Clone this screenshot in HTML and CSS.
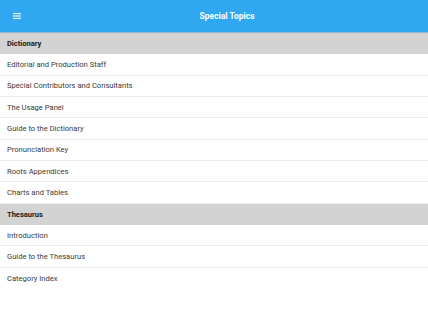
FILE: index.html
```html
<html>
<head>
<title>Special Topics</title>
<link rel="stylesheet" href="styles.css">
</head>
<body>

<div id="header">
  <div class="nav-button">
    <svg width="8" height="6" viewBox="0 0 8 6"><rect x="0" y="0" width="8" height="1.2" fill="#e6f4fd"/><rect x="0" y="2.4" width="8" height="1.2" fill="#e6f4fd"/><rect x="0" y="4.8" width="8" height="1.2" fill="#e6f4fd"/></svg>
  </div>
  <h1>Special Topics</h1>
</div>

<div class="list">
  <div class="section-header">Dictionary</div>
  <div class="item">Editorial and Production Staff</div>
  <div class="item">Special Contributors and Consultants</div>
  <div class="item">The Usage Panel</div>
  <div class="item">Guide to the Dictionary</div>
  <div class="item">Pronunciation Key</div>
  <div class="item">Roots Appendices</div>
  <div class="item">Charts and Tables</div>
  <div class="section-header">Thesaurus</div>
  <div class="item">Introduction</div>
  <div class="item">Guide to the Thesaurus</div>
  <div class="item last">Category Index</div>
</div>

</body>
</html>
```

FILE: styles.css
```css
body {
  font-family:Roboto, "Liberation Sans", sans-serif;
  margin:0;
  background:#fff;
  color:#222;
}

#header {
  display:flex;
  align-items:center;
  height:32px;
  background:#30a8f1;
  border-bottom:1px solid #8fb6cf;
}

.nav-button {
  width:26px;
  display:flex;
  align-items:center;
  padding-left:13px;
  box-sizing:border-box;
}

.nav-button svg {
  display:block;
}

#header h1 {
  flex:1;
  margin:0;
  text-align:center;
  color:#fff;
  font-size:8.5px;
  font-weight:bold;
}

.section-header {
  display:flex;
  align-items:center;
  height:21.33px;
  box-sizing:border-box;
  padding-left:7px;
  background:#d3d3d3;
  font-size:7.5px;
  font-weight:bold;
  color:#1a1a1a;
}

.item {
  display:flex;
  align-items:center;
  height:21.33px;
  box-sizing:border-box;
  padding-left:7px;
  border-bottom:1px solid #ececec;
  font-size:7.6px;
  color:#3a3a3a;
}

.item.last {
  border-bottom:none;
}
```
